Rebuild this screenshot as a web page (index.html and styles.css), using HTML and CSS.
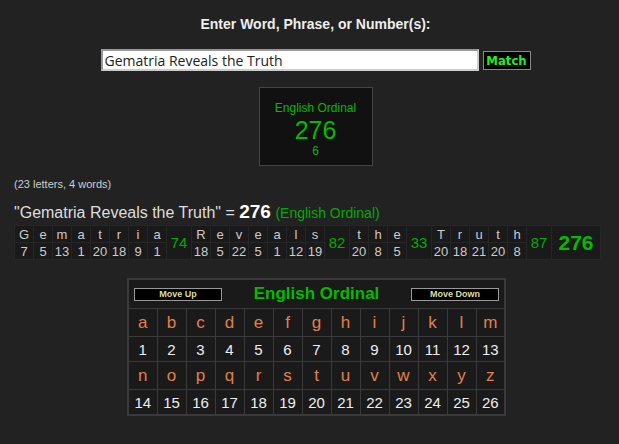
FILE: index.html
```html
<!DOCTYPE html>
<html lang="en">
<head>
    <meta charset="UTF-8">
    <title>Gematria Calculator</title>
    <link rel="stylesheet" href="styles.css">
</head>
<body>
    <div class="entry">
        <div class="prompt">Enter Word, Phrase, or Number(s):</div>
        <div class="search">
            <input class="phrase" type="text" value="Gematria Reveals the Truth">
            <button class="match">Match</button>
        </div>
        <div class="result">
            <div class="result-name">English Ordinal</div>
            <div class="result-value">276</div>
            <div class="result-sub">6</div>
        </div>
    </div>

    <div class="breakdown">
        <div class="counts">(23 letters, 4 words)</div>
        <div class="sum">"Gematria Reveals the Truth" = <b>276</b> <span class="cipher">(English Ordinal)</span></div>
        <table class="letters">
            <tr>
                <td>G</td><td>e</td><td>m</td><td>a</td><td>t</td><td>r</td><td>i</td><td>a</td>
                <td class="word" rowspan="2">74</td>
                <td>R</td><td>e</td><td>v</td><td>e</td><td>a</td><td>l</td><td>s</td>
                <td class="word" rowspan="2">82</td>
                <td>t</td><td>h</td><td>e</td>
                <td class="word" rowspan="2">33</td>
                <td>T</td><td>r</td><td>u</td><td>t</td><td>h</td>
                <td class="word" rowspan="2">87</td>
                <td class="total" rowspan="2">276</td>
            </tr>
            <tr>
                <td>7</td><td>5</td><td>13</td><td>1</td><td>20</td><td>18</td><td>9</td><td>1</td>
                <td>18</td><td>5</td><td>22</td><td>5</td><td>1</td><td>12</td><td>19</td>
                <td>20</td><td>8</td><td>5</td>
                <td>20</td><td>18</td><td>21</td><td>20</td><td>8</td>
            </tr>
        </table>
    </div>

    <div class="chart-wrap">
        <table class="chart">
            <tr class="chart-head">
                <td colspan="13">
                    <div class="chart-bar">
                        <button class="move">Move Up</button>
                        <span class="chart-title">English Ordinal</span>
                        <button class="move">Move Down</button>
                    </div>
                </td>
            </tr>
            <tr class="ch">
                <td>a</td><td>b</td><td>c</td><td>d</td><td>e</td><td>f</td><td>g</td><td>h</td><td>i</td><td>j</td><td>k</td><td>l</td><td>m</td>
            </tr>
            <tr class="val">
                <td>1</td><td>2</td><td>3</td><td>4</td><td>5</td><td>6</td><td>7</td><td>8</td><td>9</td><td>10</td><td>11</td><td>12</td><td>13</td>
            </tr>
            <tr class="ch">
                <td>n</td><td>o</td><td>p</td><td>q</td><td>r</td><td>s</td><td>t</td><td>u</td><td>v</td><td>w</td><td>x</td><td>y</td><td>z</td>
            </tr>
            <tr class="val">
                <td>14</td><td>15</td><td>16</td><td>17</td><td>18</td><td>19</td><td>20</td><td>21</td><td>22</td><td>23</td><td>24</td><td>25</td><td>26</td>
            </tr>
        </table>
    </div>
</body>
</html>
```

FILE: styles.css
```css
body {
    margin: 0;
    padding: 0;
    background-color: #222;
    font-family: "Liberation Sans", Arial, sans-serif;
    color: #ddd;
}
.entry {
    display: flex;
    flex-direction: column;
    align-items: center;
    padding: 16px 0 0 12px;
}
.prompt {
    font-size: 14px;
    font-weight: bold;
    color: #eee;
}
.search {
    display: flex;
    align-items: center;
    margin-top: 17px;
}
.phrase {
    width: 370px;
    height: 18px;
    padding: 0 2px;
    border: 2px solid #999;
    border-right-color: #ccc;
    border-bottom-color: #ccc;
    background: #fff;
    color: #222;
    font-family: "Open Sans", sans-serif;
    font-size: 14px;
}
.match {
    margin-left: 4px;
    width: 48px;
    height: 19px;
    padding: 0;
    background: #000;
    border: 1px solid #888;
    color: #2e2;
    font-family: "DejaVu Sans Condensed", sans-serif;
    font-weight: bold;
    font-size: 13px;
    line-height: 15px;
}
.result {
    margin-top: 16px;
    width: 112px;
    height: 77px;
    background: #111;
    border: 1px solid #444;
    color: #0b0;
    text-align: center;
}
.result-name {
    margin-top: 13px;
    font-size: 12px;
}
.result-value {
    font-size: 25px;
    line-height: 27px;
    margin-top: 2px;
}
.result-sub {
    font-size: 12px;
}
.breakdown {
    padding: 12px 0 0 14px;
}
.counts {
    font-size: 11px;
    color: #ccc;
}
.sum {
    margin-top: 11px;
    font-size: 16px;
    color: #ddd;
}
.sum b {
    font-size: 19px;
    color: #fff;
}
.cipher {
    font-size: 14px;
    color: #0a0;
}
.letters {
    margin-top: 2px;
    border-collapse: collapse;
    background: #1a1a1a;
}
.letters td {
    width: 18px;
    height: 16px;
    padding: 0;
    border: 1px solid #262626;
    text-align: center;
    font-size: 13px;
    color: #ccc;
    line-height: 15px;
}
.letters .word {
    width: 24px;
    font-size: 15px;
    color: #0a0;
}
.letters .total {
    width: 48px;
    font-size: 21px;
    font-weight: bold;
    color: #0b0;
}
.chart-wrap {
    display: flex;
    justify-content: center;
    padding: 18px 0 0 14px;
}
.chart {
    width: 379px;
    table-layout: fixed;
    border-collapse: collapse;
    background: #1a1a1a;
    border: 2px solid #3a3a3a;
}
.chart td {
    border: 1px solid #3a3a3a;
    padding: 0;
    text-align: center;
}
.chart-head td {
    height: 28px;
}
.chart-bar {
    display: flex;
    justify-content: space-between;
    align-items: center;
    padding: 0 5px;
}
.move {
    width: 88px;
    height: 13px;
    padding: 0;
    background: #000;
    border: 1px solid #999;
    color: #dcdc9a;
    font-family: "Liberation Sans", Arial, sans-serif;
    font-weight: bold;
    font-size: 9px;
    line-height: 11px;
}
.chart-title {
    font-size: 17px;
    font-weight: bold;
    color: #0b0;
}
.ch td {
    height: 27px;
    font-size: 17px;
    color: #e0804a;
}
.val td {
    height: 24px;
    font-size: 15px;
    color: #eee;
}
```
